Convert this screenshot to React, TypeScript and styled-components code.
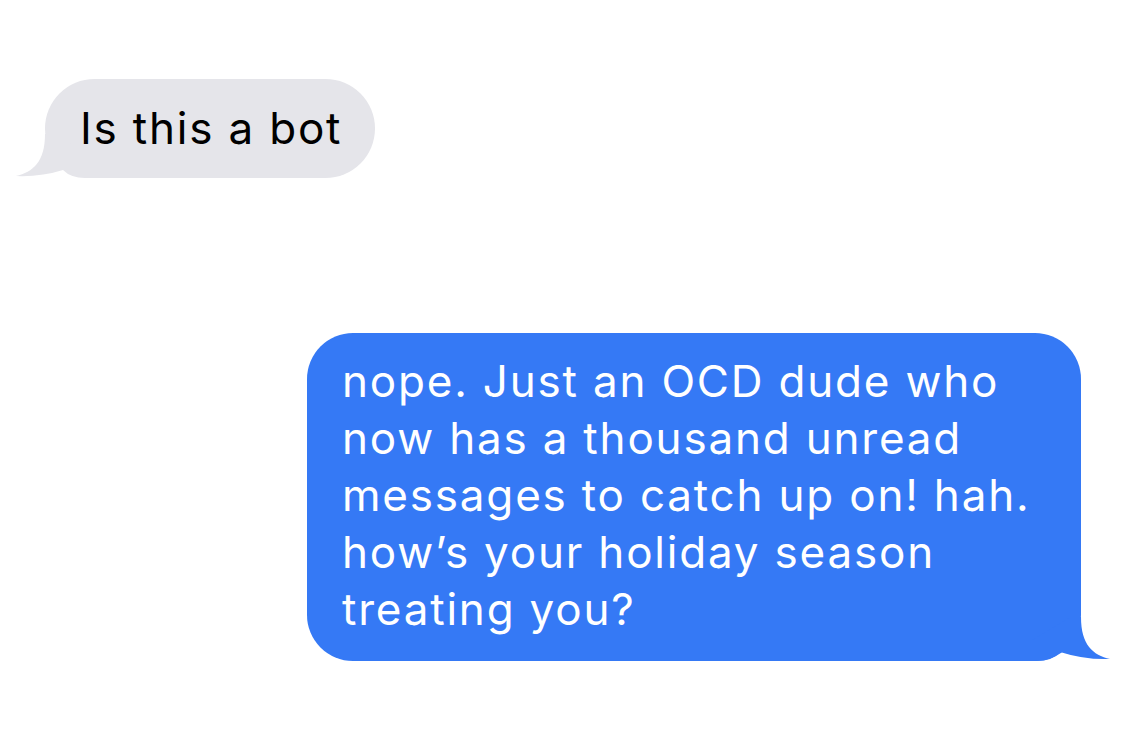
import { FC } from "react";
import styled, { createGlobalStyle } from "styled-components";

const GlobalStyle = createGlobalStyle`
  html, body {
    margin: 0;
    padding: 0;
    background: #ffffff;
  }
  body {
    font-family: Inter, "Open Sans", "Liberation Sans", sans-serif;
    -webkit-font-smoothing: antialiased;
  }
`;

const GREY = "#e5e5ea";
const BLUE = "#3579f5";

type Side = "in" | "out";

const incomingLines = ["Is this a bot"];
const outgoingLines = [
  "nope. Just an OCD dude who",
  "now has a thousand unread",
  "messages to catch up on! hah.",
  "how’s your holiday season",
  "treating you?",
];

// tail drawn under the text, tucked into the bubble's bottom corner
const Bubble: FC<{ side: Side; lines: string[] }> = ({ side, lines }) => (
  <BubbleBox $side={side}>
    <Tail $side={side} width="80" height="50" viewBox="0 0 80 50">
      {side === "in" ? (
        <path
          d="M30 6 C30 34 18 44 1 48 Q26 49 48 42 Q56 50 70 50 L80 50 L80 30 L40 6 Z"
          fill={GREY}
        />
      ) : (
        <path
          d="M50 6 C50 34 62 44 79 48 Q54 49 29 41 Q22 50 5 50 L0 50 L0 30 L40 6 Z"
          fill={BLUE}
        />
      )}
    </Tail>
    {lines.map((line) => (
      <Line key={line}>{line}</Line>
    ))}
  </BubbleBox>
);

export default function App() {
  return (
    <>
      <GlobalStyle />
      <Thread>
        <Row $side="in">
          <Bubble side="in" lines={incomingLines} />
        </Row>
        <Row $side="out">
          <Bubble side="out" lines={outgoingLines} />
        </Row>
      </Thread>
    </>
  );
}

const Thread = styled.div`
  width: 1125px;
  height: 752px;
  box-sizing: border-box;
  padding: 79px 44px 0 45px;
  display: flex;
  flex-direction: column;
  gap: 155px;
  overflow: hidden;
`;

const Row = styled.div<{ $side: Side }>`
  display: flex;
  justify-content: ${(p) => (p.$side === "in" ? "flex-start" : "flex-end")};
`;

const BubbleBox = styled.div<{ $side: Side }>`
  position: relative;
  box-sizing: border-box;
  width: ${(p) => (p.$side === "in" ? "330px" : "774px")};
  padding: ${(p) => (p.$side === "in" ? "21px 33px 21px 35px" : "20px 33px 23px 35px")};
  border-radius: ${(p) => (p.$side === "in" ? "50px" : "46px")};
  background: ${(p) => (p.$side === "in" ? GREY : BLUE)};
  color: ${(p) => (p.$side === "in" ? "#000000" : "#ffffff")};
  font-size: 44px;
  line-height: 57px;
  letter-spacing: 1.8px;
`;

const Line = styled.div`
  position: relative;
  white-space: nowrap;
`;

const Tail = styled.svg<{ $side: Side }>`
  position: absolute;
  bottom: 0;
  ${(p) => (p.$side === "in" ? "left: -30px;" : "right: -30px;")}
  display: block;
`;
